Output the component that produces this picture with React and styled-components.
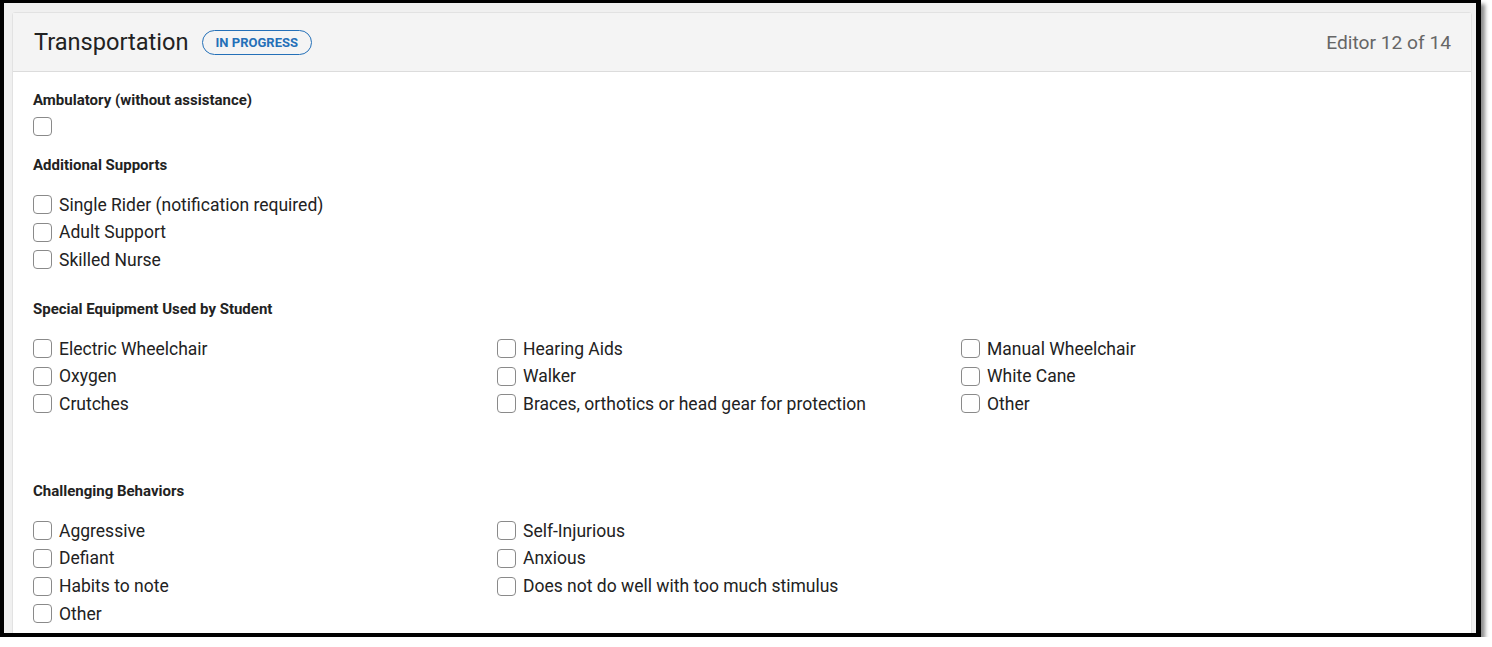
import React from 'react'
import styled, { createGlobalStyle } from 'styled-components'

const GlobalStyle = createGlobalStyle`
  html, body {
    margin: 0;
    padding: 0;
    background: #ffffff;
    font-family: Roboto, 'Liberation Sans', sans-serif;
  }
`;

const sections = [
   { title: 'Additional Supports', columns: 1, top: 20, items: ['Single Rider (notification required)', 'Adult Support', 'Skilled Nurse'] },
   {
      title: 'Special Equipment Used by Student',
      columns: 3,
      top: 30,
      items: ['Electric Wheelchair', 'Hearing Aids', 'Manual Wheelchair', 'Oxygen', 'Walker', 'White Cane', 'Crutches', 'Braces, orthotics or head gear for protection', 'Other'],
      spaceAfter: 58
   },
   {
      title: 'Challenging Behaviors',
      columns: 3,
      top: 30,
      items: ['Aggressive', 'Self-Injurious', null, 'Defiant', 'Anxious', null, 'Habits to note', 'Does not do well with too much stimulus', null, 'Other']
   },
]

const Check = ({ label }) => (
   <CheckRow>
      <Box type="checkbox" />
      <CheckText>{label}</CheckText>
   </CheckRow>
)

const App = () => {
   return (
      <>
         <GlobalStyle />
         <Frame>
            <Card>
               <Header>
                  <TitleGroup>
                     <Title>Transportation</Title>
                     <Badge>IN PROGRESS</Badge>
                  </TitleGroup>
                  <Counter>Editor 12 of 14</Counter>
               </Header>

               <Body>
                  <Field>
                     <Label>Ambulatory (without assistance)</Label>
                     <Box type="checkbox" />
                  </Field>

                  {sections.map((s) => (
                     <Section key={s.title} $top={s.top} $after={s.spaceAfter}>
                        <Label>{s.title}</Label>
                        <Grid $cols={s.columns}>
                           {s.items.map((item, i) =>
                              item ? <Check key={i} label={item} /> : <span key={i} />
                           )}
                        </Grid>
                     </Section>
                  ))}
               </Body>
            </Card>
         </Frame>
      </>
   )
}

export default App

const Frame = styled.div`
    width: 1481px;
    height: 637px;
    box-sizing: border-box;
    border: 4px solid #000;
    border-top-width: 3px;
    border-right-width: 5px;
    background: #f0f0f0;
    padding: 9px 4px 0 8px;
    overflow: hidden;
    box-shadow: 4px 4px 4px rgba(0, 0, 0, 0.45);
`;

const Card = styled.div`
    background: #fff;
    border: 1px solid #e2e2e2;
    border-radius: 3px;
    height: 700px;
`;

const Header = styled.div`
    display: flex;
    align-items: center;
    justify-content: space-between;
    height: 58px;
    padding: 0 20px 0 21px;
    background: #f4f4f4;
    border-bottom: 1px solid #dcdcdc;
`;

const TitleGroup = styled.div`
    display: flex;
    align-items: center;
    gap: 13px;
`;

const Title = styled.h2`
    margin: 0;
    font-size: 23.6px;
    font-weight: 400;
    color: #222;
`;

const Badge = styled.span`
    display: inline-flex;
    align-items: center;
    box-sizing: border-box;
    height: 25px;
    padding: 0 13px;
    border: 1.5px solid #2470b8;
    border-radius: 14px;
    color: #2470b8;
    font-size: 13px;
    font-weight: 700;
`;

const Counter = styled.span`
    font-size: 19.2px;
    color: #666;
`;

const Body = styled.div`
    padding: 19px 20px 0 20px;
    color: #222;
`;

const Field = styled.div`
    display: flex;
    flex-direction: column;
    gap: 8px;
`;

const Section = styled.div`
    margin-top: ${({ $top }) => $top}px;
    margin-bottom: ${({ $after }) => ($after || 0) + 10}px;
    display: flex;
    flex-direction: column;
    gap: 20px;
    &:last-child { margin-bottom: 0; }
`;

const Label = styled.div`
    font-size: 15px;
    font-weight: 700;
    color: #222;
    line-height: 18px;
`;

const Grid = styled.div`
    display: grid;
    grid-template-columns: repeat(${({ $cols }) => $cols}, 464px);
    row-gap: 6.6px;
`;

const CheckRow = styled.label`
    display: flex;
    align-items: center;
    gap: 7px;
    height: 21px;
`;

const Box = styled.input`
    appearance: none;
    margin: 0;
    width: 19px;
    height: 19px;
    box-sizing: border-box;
    border: 1px solid #8a8a8a;
    border-radius: 4px;
    background: #fff;
`;

const CheckText = styled.span`
    font-size: 17.5px;
    color: #222;
`;
